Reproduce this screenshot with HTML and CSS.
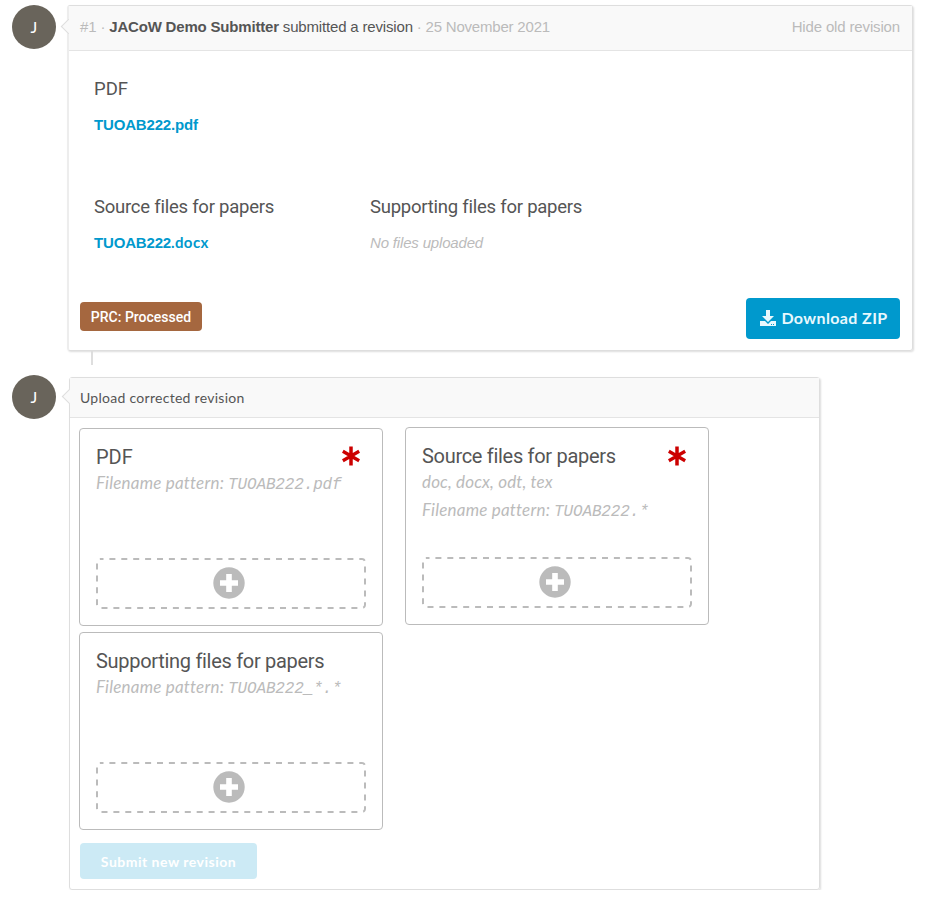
FILE: index.html
```html
<!DOCTYPE html>
<html lang="en">
<head>
<meta charset="utf-8">
<title>Paper revisions</title>
<link rel="stylesheet" href="styles.css">
</head>
<body>
<main class="timeline">
  <section class="item">
    <div class="avatar">J</div>
    <article class="card old">
      <header class="card-head">
        <div><span class="muted num">#1 · </span><strong>JACoW Demo Submitter</strong><span class="action"> submitted a revision</span><span class="muted date"> · 25 November 2021</span></div>
        <span class="muted hide">Hide old revision</span>
      </header>
      <div class="files">
        <div class="group wide"><h2 class="short">PDF</h2><a class="file">TUOAB222.pdf</a></div>
        <div class="group"><h2>Source files for papers</h2><a class="file docx">TUOAB222<span class="ext">.docx</span></a></div>
        <div class="group"><h2>Supporting files for papers</h2><em class="none">No files uploaded</em></div>
      </div>
      <footer class="card-foot">
        <span class="tag"><span>PRC: Processed</span></span>
        <button class="download"><svg width="16" height="16" viewBox="0 0 16 16" fill="currentColor"><path d="M6 0h4v6h4L8 12 2 6h4z"/><path d="M0 11h5l3 3 3-3h5v5H0z"/><path d="M11 14h1v1h-1zM13 14h1v1h-1z" fill="#0099cd"/></svg><span>Download ZIP</span></button>
      </footer>
    </article>
  </section>
  <div class="connector"></div>
  <section class="item">
    <div class="avatar">J</div>
    <article class="card upload">
      <header class="card-head"><span class="upload-title">Upload corrected revision</span></header>
      <div class="slots">
        <div class="slot pdf">
          <h3 class="short">PDF</h3>
          <svg class="required" width="18" height="20" viewBox="0 0 18 20"><path d="M9 .5v19M.8 5.3l16.4 9.4M.8 14.7l16.4-9.4"/></svg>
          <p class="pattern"><span>Filename pattern:</span> <code>TUOAB222.pdf</code></p>
          <div class="drop"><svg class="dash" width="270" height="51"><rect x="1" y="1" width="268" height="49" rx="3"/></svg><svg width="32" height="32" viewBox="0 0 32 32"><circle cx="16" cy="16" r="15.7"/><path d="M13.2 7h5.6v6.2H25v5.6h-6.2V25h-5.6v-6.2H7v-5.6h6.2z"/></svg></div>
        </div>
        <div class="slot source">
          <h3>Source files for papers</h3>
          <svg class="required" width="18" height="20" viewBox="0 0 18 20"><path d="M9 .5v19M.8 5.3l16.4 9.4M.8 14.7l16.4-9.4"/></svg>
          <p class="types">doc, docx, odt, tex</p>
          <p class="pattern"><span>Filename pattern:</span> <code>TUOAB222.*</code></p>
          <div class="drop"><svg class="dash" width="270" height="51"><rect x="1" y="1" width="268" height="49" rx="3"/></svg><svg width="32" height="32" viewBox="0 0 32 32"><circle cx="16" cy="16" r="15.7"/><path d="M13.2 7h5.6v6.2H25v5.6h-6.2V25h-5.6v-6.2H7v-5.6h6.2z"/></svg></div>
        </div>
        <div class="slot extra">
          <h3>Supporting files for papers</h3>
          <p class="pattern"><span>Filename pattern:</span> <code>TUOAB222_*.*</code></p>
          <div class="drop"><svg class="dash" width="270" height="51"><rect x="1" y="1" width="268" height="49" rx="3"/></svg><svg width="32" height="32" viewBox="0 0 32 32"><circle cx="16" cy="16" r="15.7"/><path d="M13.2 7h5.6v6.2H25v5.6h-6.2V25h-5.6v-6.2H7v-5.6h6.2z"/></svg></div>
        </div>
      </div>
      <button class="submit" disabled><span>Submit new revision</span></button>
    </article>
  </section>
</main>
</body>
</html>
```
FILE: styles.css
```css
* { box-sizing: border-box; }
body { margin: 0; background: #fff; color: #555; font-family: "Liberation Sans", sans-serif; }
h2, h3, p { margin: 0; font-weight: 400; white-space: nowrap; }
button { border: 0; margin: 0; border-radius: 4px; font-family: Lato, sans-serif; font-weight: 700; white-space: nowrap; }
svg { display: block; flex: none; }
.timeline { padding: 5px 0 0 12px; }
.item { display: flex; align-items: flex-start; }
.avatar { width: 44px; height: 44px; border-radius: 50%; background: #69645b; color: #fff; font: 16px/43px Lato, sans-serif; text-align: center; flex: none; }
.card { position: relative; border: 1px solid #dedede; border-radius: 3px; box-shadow: 1px 1px 2px #ddd; display: flex; flex-direction: column; }
.card::before { content: ""; position: absolute; left: -6px; top: 15px; width: 10px; height: 10px; background: #f9f9f9; border: solid #dedede; border-width: 0 0 1px 1px; transform: rotate(45deg); }
.old { width: 846px; height: 346px; margin-left: 11px; border-left: 2px solid #ededed; }
.upload { width: 751px; height: 513px; margin-left: 13px; margin-top: 2px; }
.upload::before { top: 13px; }
.card-head { position: relative; background: #f9f9f9; border-bottom: 1px solid #e4e4e4; display: flex; justify-content: space-between; align-items: center; padding: 0 12px 0 11px; white-space: pre; }
.old .card-head { height: 45px; font-size: 15px; padding-bottom: 3px; }
.upload .card-head { height: 40px; padding: 0 10px; }
.muted { color: #bbb; }
.num { letter-spacing: -.15px; }
strong { letter-spacing: -.19px; }
.action { letter-spacing: -.17px; }
.date { letter-spacing: -.2px; }
.hide { letter-spacing: -.15px; }
.upload-title { font: 14px Lato, sans-serif; letter-spacing: .28px; }
.files { display: grid; grid-template-columns: 276px 276px; grid-template-rows: 118px 118px; padding: 25px 0 0 25px; }
.wide { grid-column: 1 / -1; }
h2 { font: 18.5px/26px Roboto, sans-serif; margin-bottom: 13px; letter-spacing: -.24px; }
.file, .none { display: block; font-size: 15px; line-height: 20px; }
.file { color: #0099cd; font-weight: 700; letter-spacing: -.17px; }
.docx { margin-top: -1px; }
.ext { font-family: Lato, sans-serif; letter-spacing: .4px; }
.none { color: #bbb; letter-spacing: -.17px; }
.card-foot { display: flex; justify-content: space-between; align-items: flex-start; padding: 0 12px 0 11px; margin-top: -14px; }
.tag { margin-top: 4px; width: 122px; height: 29px; border-radius: 4px; background: #a5673f; color: #fff; font: 500 14px/30px Roboto, sans-serif; text-align: center; }
.download { width: 154px; height: 41px; background: #0099cd; color: #e8f8fd; font-size: 16px; letter-spacing: .38px; display: flex; align-items: center; justify-content: center; gap: 5px; padding: 0 0 2px 2px; }
.connector { width: 2px; height: 14px; margin: 0 0 10px 79px; background: #dedede; }
.slots { display: grid; grid-template-columns: 304px 304px; grid-template-rows: 198px 198px; column-gap: 22px; row-gap: 6px; padding: 9px; }
.slot { position: relative; border: 1px solid #bbb; border-radius: 4px; padding: 15px 16px 16px; display: flex; flex-direction: column; }
.pdf, .extra { margin-top: 1px; margin-bottom: -1px; }
h3 { font: 20px/26px Roboto, sans-serif; letter-spacing: -.3px; }
.short { letter-spacing: 0; }
.required { position: absolute; right: 22px; top: 18px; fill: none; stroke: #c00; stroke-width: 3.5; }
.pdf .required { top: 17px; }
.types, .pattern { color: #bbb; font: italic 17px/28px Lato, sans-serif; }
.types { letter-spacing: .15px; margin-top: -1px; }
.pattern span { letter-spacing: .2px; }
.pdf .pattern, .extra .pattern { margin-top: -1px; }
code { font: italic 16px "Liberation Mono", monospace; letter-spacing: -.15px; }
.drop { position: relative; height: 51px; margin-top: auto; padding: 0 4px 2px 0; display: flex; align-items: center; justify-content: center; }
.drop .dash { position: absolute; left: 0; top: 0; }
.dash rect { fill: none; stroke: #bbb; stroke-width: 2; stroke-dasharray: 6 5.9; stroke-dashoffset: 2.5; }
.drop circle { fill: #bbb; }
.drop path { fill: #fff; }
.submit { width: 177px; height: 36px; margin: 5px 0 0 10px; padding: 0; background: #cceaf5; color: #fff; font-size: 14px; letter-spacing: .5px; }
```
